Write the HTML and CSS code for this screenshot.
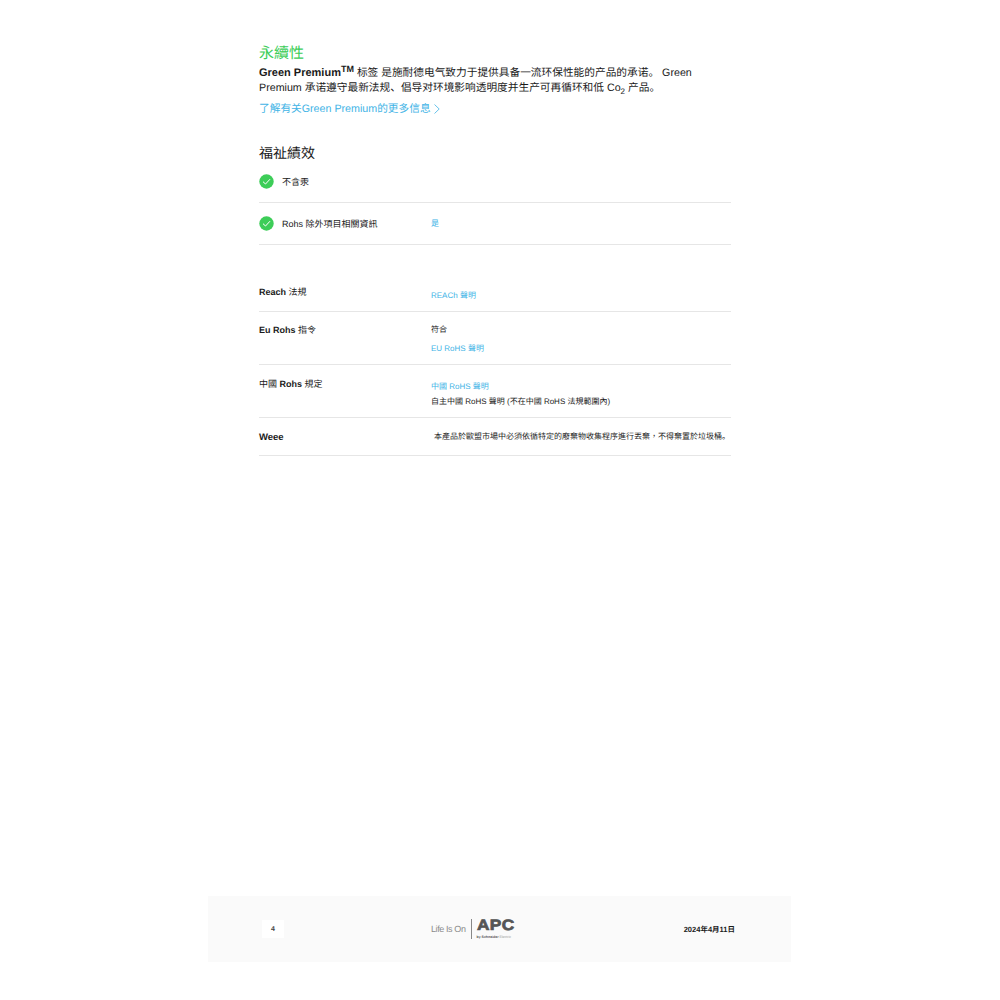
FILE: index.html
```html
<!DOCTYPE html>
<html lang="zh-Hant">
<head>
<meta charset="utf-8">
<title>永續性</title>
<link rel="stylesheet" href="styles.css">
</head>
<body>
<main class="page">
  <section class="content">
    <h1 class="title">永續性</h1>
    <p class="intro" lang="zh-Hans"><b class="strong">Green Premium<sup class="tm">TM</sup></b> 标签 是施耐德电气致力于提供具备一流环保性能的产品的承诺。 Green Premium 承诺遵守最新法规、倡导对环境影响透明度并生产可再循环和低 Co<sub class="sub">2</sub> 产品。</p>
    <a class="more">了解有关Green Premium的更多信息
      <svg class="chev" width="6" height="10" viewBox="0 0 6 10"><path d="M.5.5 5.2 5 .5 9.5" fill="none" stroke="#42b4e6" stroke-width=".8"/></svg>
    </a>
    <h2 class="subtitle">福祉績效</h2>

    <div class="check first">
      <svg class="ok" width="15" height="15" viewBox="0 0 15 15"><circle cx="7.5" cy="7.5" r="7.2" fill="#3dcd58"/><path d="M4 7.7 6.5 10 11 5.2" fill="none" stroke="#fff" stroke-width="1"/></svg>
      <span class="check-label">不含汞</span>
    </div>
    <div class="check second">
      <svg class="ok" width="15" height="15" viewBox="0 0 15 15"><circle cx="7.5" cy="7.5" r="7.2" fill="#3dcd58"/><path d="M4 7.7 6.5 10 11 5.2" fill="none" stroke="#fff" stroke-width="1"/></svg>
      <span class="check-label wide">Rohs 除外項目相關資訊</span>
      <a class="val link yes">是</a>
    </div>

    <div class="row reach">
      <div class="name"><b>Reach</b> 法規</div>
      <div class="vals"><a class="val link">REACh 聲明</a></div>
    </div>
    <div class="row eu">
      <div class="name"><b>Eu Rohs</b> 指令</div>
      <div class="vals"><span class="val">符合</span><a class="val link">EU RoHS 聲明</a></div>
    </div>
    <div class="row cn">
      <div class="name">中國 <b>Rohs</b> 規定</div>
      <div class="vals"><a class="val link">中國 RoHS 聲明</a><span class="val">自主中國 RoHS 聲明 (不在中國 RoHS 法規範圍內)</span></div>
    </div>
    <div class="row weee">
      <div class="name"><b>Weee</b></div>
      <div class="vals"><span class="val notice">本產品於歐盟市場中必須依循特定的廢棄物收集程序進行丟棄，不得棄置於垃圾桶<span class="sc-stop" lang="zh-Hans">。</span></span></div>
    </div>
  </section>

  <footer class="footer">
    <span class="pageno">4</span>
    <div class="brand">
      <span class="lifeison">Life Is On</span>
      <span class="divider"></span>
      <div class="apc">
        <span class="apc-name">APC</span>
        <span class="apc-by"><b>by Schneider</b> Electric</span>
      </div>
    </div>
    <span class="date">2024年4月11日</span>
  </footer>
</main>
</body>
</html>
```
FILE: styles.css
```css
* { box-sizing: border-box; }
html, body { margin: 0; padding: 0; background: #fff; }
body { font-family: "Liberation Sans", "Noto Sans CJK TC", sans-serif; color: #1a1a1a; text-rendering: geometricPrecision; }
a { text-decoration: none; }
.page { width: 1000px; height: 1000px; display: flex; flex-direction: column; align-items: center; }
.content { width: 472px; margin-left: -10px; padding-top: 45px; flex: 1; }
.title { margin: 0; font-size: 15px; line-height: 18px; font-weight: 400; color: #3dcd58; }
.intro { margin: 3px 0 0; width: 445px; font-family: "Liberation Sans", "Noto Sans CJK SC", sans-serif; font-size: 10.7px; line-height: 15px; }
.strong { font-size: 11px; }
.tm { font-size: 9px; font-weight: 700; line-height: 0; vertical-align: 4px; }
.sub { font-size: 8px; line-height: 0; vertical-align: -3px; }
.more { display: flex; align-items: center; gap: 3px; margin-top: 6px; font-family: "Liberation Sans", "Noto Sans CJK SC", sans-serif; font-size: 10.7px; line-height: 15px; color: #42b4e6; white-space: nowrap; }
.chev { margin-bottom: 1px; }
.subtitle { margin: 26px 0 0; font-size: 14px; line-height: 20px; font-weight: 400; }
.check { display: flex; align-items: center; border-bottom: 1px solid #e6e6e6; font-size: 9px; }
.check.first { height: 41px; margin-top: -1px; padding-bottom: 1px; }
.check.second { height: 42px; }
.ok { flex: none; }
.check-label { margin-left: 8px; }
.check-label.wide { width: 149px; }
.val { display: block; font-size: 8px; line-height: 12px; color: #1a1a1a; white-space: nowrap; }
.link { color: #42b4e6; }
.yes { padding-top: 1px; }
.sc-stop { font-family: "Noto Sans CJK SC", sans-serif; }
.row { display: flex; border-bottom: 1px solid #e6e6e6; }
.name { width: 172px; font-size: 9px; line-height: 12px; flex: none; }
.vals { display: flex; flex-direction: column; gap: 7px; }
.reach { height: 67px; padding-top: 41px; }
.reach .vals { padding-top: 4px; }
.eu { height: 53px; padding-top: 12px; }
.cn { height: 53px; padding-top: 13px; }
.cn .vals { padding-top: 3px; gap: 3px; }
.weee { height: 38px; padding-top: 13px; }
.weee .name { width: 175px; font-size: 9.5px; padding-top: 1px; }
.footer { width: 583px; height: 66px; margin: 0 1px 38px 0; background: #fafafa; display: flex; align-items: center; padding: 0 56px 0 54px; }
.pageno { width: 22px; height: 18px; background: #fff; font-size: 7px; font-weight: 700; color: #444; display: flex; align-items: center; justify-content: center; }
.brand { display: flex; align-items: center; margin-left: 147px; }
.lifeison { font-size: 9px; letter-spacing: -.4px; color: #8a8a8a; white-space: nowrap; }
.divider { width: 1px; height: 20px; background: #888; margin: 0 5px; }
.apc { display: flex; flex-direction: column; }
.apc-name { font-size: 15px; line-height: 13px; font-weight: 700; color: #555; letter-spacing: .3px; -webkit-text-stroke: .7px #555; transform: scaleX(1.15); transform-origin: left; }
.apc-by { font-size: 3.5px; line-height: 6px; color: #999; white-space: nowrap; margin-top: 2px; }
.apc-by b { color: #555; }
.date { margin-left: auto; font-size: 7.5px; font-weight: 700; }
```
